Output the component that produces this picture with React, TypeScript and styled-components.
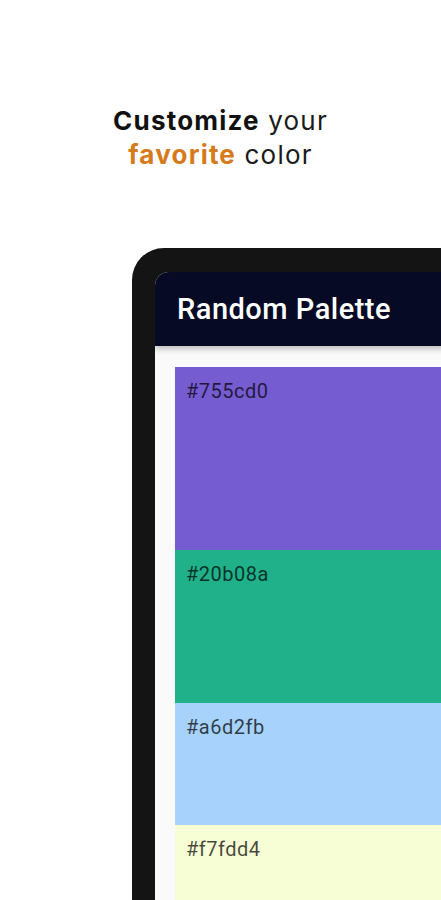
import React from 'react';
import styled, { createGlobalStyle } from 'styled-components';

const GlobalStyle = createGlobalStyle`
  html, body {
    margin: 0;
    padding: 0;
    background: #ffffff;
    overflow: hidden;
  }
  body {
    font-family: Roboto, 'Noto Sans', sans-serif;
  }
`;

const Page = styled.div`
  width: 441px;
  height: 900px;
  overflow: hidden;
  display: flex;
  flex-direction: column;
`;

const Headline = styled.h1`
  margin: 104px 0 0;
  text-align: center;
  font-family: Inter, 'Liberation Sans', sans-serif;
  font-size: 26px;
  font-weight: 400;
  line-height: 34px;
  letter-spacing: 1.2px;
  color: #1a1a1a;
`;

const Strong = styled.span<{ $accent?: boolean }>`
  font-weight: 700;
  color: ${(p) => (p.$accent ? '#d57b1c' : '#111111')};
`;

const Device = styled.div`
  margin: 76px 0 0 132px;
  width: 420px;
  flex: 1;
  padding: 24px 0 0 23px;
  background: #141414;
  border-radius: 32px 0 0 0;
  display: flex;
`;

const Screen = styled.div`
  flex: 1;
  background: #fafafa;
  border-radius: 14px 0 0 0;
  overflow: hidden;
  display: flex;
  flex-direction: column;
`;

const AppBar = styled.header`
  height: 74px;
  flex-shrink: 0;
  background: #060a24;
  display: flex;
  align-items: center;
  padding-left: 22px;
  box-shadow: 0 3px 6px rgba(0, 0, 0, 0.25);
  position: relative;
  z-index: 1;
`;

const Title = styled.h2`
  margin: 0;
  color: #ffffff;
  font-family: Roboto, sans-serif;
  font-size: 29px;
  font-weight: 500;
  letter-spacing: 0.5px;
`;

const PaletteList = styled.div`
  flex: 1;
  padding: 21px 0 0 20px;
  display: flex;
  flex-direction: column;
`;

const Swatch = styled.div<{ $color: string; $height?: number }>`
  background: ${(p) => p.$color};
  height: ${(p) => (p.$height ? `${p.$height}px` : 'auto')};
  flex: ${(p) => (p.$height ? '0 0 auto' : '1')};
  padding: 12px 0 0 11px;
  box-sizing: border-box;
`;

const HexLabel = styled.span`
  font-family: Roboto, sans-serif;
  font-size: 20px;
  letter-spacing: 0.5px;
  color: rgba(0, 0, 0, 0.72);
`;

const swatches = [
  { color: '#755cd0', height: 183 },
  { color: '#20b08a', height: 153 },
  { color: '#a6d2fb', height: 122 },
  { color: '#f7fdd4' },
];

export default function App() {
  return (
    <Page>
      <GlobalStyle />
      <Headline>
        <Strong>Customize</Strong> your
        <br />
        <Strong $accent>favorite</Strong> color
      </Headline>
      <Device>
        <Screen>
          <AppBar>
            <Title>Random Palette</Title>
          </AppBar>
          <PaletteList>
            {swatches.map((s) => (
              <Swatch key={s.color} $color={s.color} $height={s.height}>
                <HexLabel>{s.color}</HexLabel>
              </Swatch>
            ))}
          </PaletteList>
        </Screen>
      </Device>
    </Page>
  );
}
